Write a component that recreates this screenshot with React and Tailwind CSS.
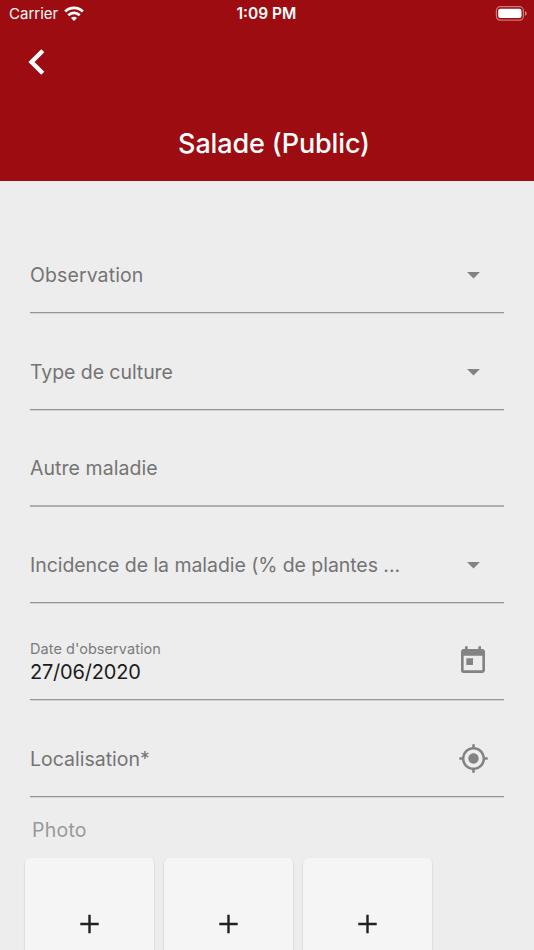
import React from 'react';
import { MdArrowDropDown, MdToday, MdMyLocation } from 'react-icons/md';

const thinLine = 'border-b border-[#959595] shadow-[0_1px_0_#d3d3d3]';

const fields = [
  { name: 'observation', label: 'Observation', type: 'select', tracking: 'tracking-[0.1px]', line: thinLine },
  { name: 'culture', label: 'Type de culture', type: 'select', tracking: 'tracking-[-0.07px]', line: thinLine },
  { name: 'maladie', label: 'Autre maladie', type: 'text', tracking: 'tracking-[0.06px]', line: 'border-b border-[#afafaf] shadow-[0_1px_0_#afafaf]' },
  { name: 'incidence', label: 'Incidence de la maladie (% de plantes ...', type: 'select', tracking: 'tracking-[-0.06px]', line: thinLine },
  { name: 'date', label: "Date d'observation", value: '27/06/2020', type: 'date', line: thinLine },
  { name: 'localisation', label: 'Localisation*', type: 'location', tracking: 'tracking-[0px]', line: thinLine },
];

const photos = [1, 2, 3];

const StatusBar = () => (
  <div className="grid h-[28px] grid-cols-3 items-center pl-[9px] pr-[7px] text-white">
    <div className="flex items-center gap-[6px]">
      <span className="text-[15px] leading-[20px]">Carrier</span>
      <svg className="mb-[2px] h-[15px] w-[20px]" viewBox="0 0 20 15" fill="none" stroke="currentColor" strokeWidth="2.8">
        <path d="M1.2 5.6a12.4 12.4 0 0 1 17.6 0" />
        <path d="M4.3 9.2a8 8 0 0 1 11.4 0" />
        <path d="M10 15l-3-3a4.2 4.2 0 0 1 6 0z" fill="currentColor" stroke="none" />
      </svg>
    </div>
    <span className="pr-[3px] text-center text-[15.5px] font-semibold leading-[20px]">1:09 PM</span>
    <svg className="mb-[2px] h-[15px] w-[32px] justify-self-end" viewBox="0 0 32 15" fill="none">
      <rect x="1.4" y="0.7" width="27" height="13.4" rx="3.8" stroke="#fff" strokeOpacity="0.45" strokeWidth="1.2" />
      <rect x="3.2" y="2.7" width="23.3" height="9.4" rx="2" fill="#fff" />
      <path d="M30 5v4.8c1-.4 1.7-1.3 1.7-2.4s-.7-2-1.7-2.4z" fill="#fff" fillOpacity="0.5" />
    </svg>
  </div>
);

const FieldIcon = ({ type }) => {
  if (type === 'select') return <MdArrowDropDown className="h-[31px] w-[31px]" />;
  if (type === 'date') return <MdToday className="h-[32px] w-[32px]" />;
  if (type === 'location') return <MdMyLocation className="h-[31px] w-[31px]" />;
  return null;
};

const Field = ({ field }) => (
  <div className={`flex h-[96.8px] items-end ${field.line}`}>
    <div className="flex h-[75px] w-full items-center justify-between pr-[15px] text-[#838383]">
      {field.value ? (
        <div className="flex flex-col pt-[1px]">
          <span className="text-[14.5px] leading-[20px] tracking-[0.06px] text-[#7b7b7b]">{field.label}</span>
          <span className="pt-[0.5px] text-[20px] leading-[26px] tracking-[-0.2px] text-[#1c1c1c]">{field.value}</span>
        </div>
      ) : (
        <span className={`whitespace-nowrap pt-[1px] text-[19.5px] leading-[26px] text-[#747474] ${field.tracking}`}>
          {field.label}
        </span>
      )}
      <FieldIcon type={field.type} />
    </div>
  </div>
);

const PhotoTile = () => (
  <button className="flex h-[132px] w-[129px] items-center justify-center rounded-[5px] bg-[#f5f5f5] shadow-[0_1px_2px_rgba(0,0,0,0.2)]">
    <svg className="h-[20px] w-[20px]" viewBox="0 0 20 20" stroke="#212121" strokeWidth="2.4">
      <path d="M9.5 0.8v18.4M0.3 10h18.4" />
    </svg>
  </button>
);

const App = () => (
  <div className="h-[950px] w-[534px] overflow-hidden bg-[#ededed] font-['Inter',sans-serif]">
    <header className="h-[181px] bg-[#9c0c10]">
      <StatusBar />
      <div className="flex h-[68px] items-center pl-[28px]">
        <svg className="h-[26px] w-[17px]" viewBox="0 0 17 26" fill="none" stroke="#fff" strokeWidth="4.4">
          <path d="M14.8 1.8L3.5 13L14.8 24.2" />
        </svg>
      </div>
      <h1 className="mt-[31px] pl-[14px] text-center text-[27px] font-medium leading-[34px] tracking-[-0.14px] text-white">
        Salade (Public)
      </h1>
    </header>

    <main>
      <form className="px-[30px] pt-[35px]">
        {fields.map((field) => (
          <Field key={field.name} field={field} />
        ))}
      </form>

      {/* Photos */}
      <section className="pl-[25px]">
        <h2 className="pl-[7px] pt-[20px] text-[19.5px] leading-[26px] tracking-[0.25px] text-[#999999]">Photo</h2>
        <div className="mt-[15px] flex gap-[10px]">
          {photos.map((id) => (
            <PhotoTile key={id} />
          ))}
        </div>
      </section>
    </main>
  </div>
);

export default App;
